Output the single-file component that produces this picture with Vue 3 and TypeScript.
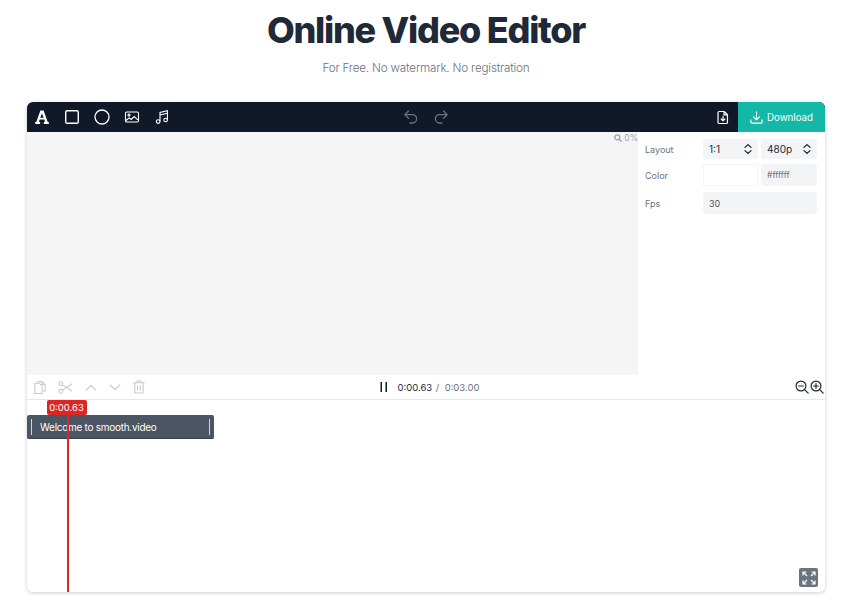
<script setup lang="ts">
const clipLabel: string = 'Welcome to smooth.video'
</script>

<template>
  <div class="page">
    <header class="head">
      <h1>Online Video Editor</h1>
      <p>For Free. No watermark. No registration</p>
    </header>
    <section class="editor">
      <div class="toolbar">
        <div class="tools">
          <svg class="ti" width="16" height="16" viewBox="0 0 16 16"><path fill="#fff" d="M6.4 1.5h3.2l4 11.2 1.2.4V15H9.8v-1.9l1.2-.3-.7-2.2H5.6l-.7 2.2 1.2.3V15H1.2v-1.9l1.2-.4zM8 4.6 6.2 8.8h3.5z"/></svg>
          <svg class="ti" width="16" height="16" viewBox="0 0 16 16" fill="none" stroke="#fff" stroke-width="1.4"><rect x="1.7" y="1.7" width="12.6" height="12.6" rx="1.6"/></svg>
          <svg class="ti" width="16" height="16" viewBox="0 0 16 16" fill="none" stroke="#fff" stroke-width="1.3"><circle cx="8" cy="8" r="7"/></svg>
          <svg class="ti" width="16" height="16" viewBox="0 0 16 16" fill="none" stroke="#fff" stroke-width="1.1"><rect x="1.5" y="3" width="13" height="10" rx="1.2"/><circle cx="5" cy="6" r="1"/><path d="M2 11.5l3.2-2.6 2 1.6 3-3 3.6 3.4"/></svg>
          <svg class="ti" width="16" height="16" viewBox="0 0 16 16" fill="none" stroke="#fff" stroke-width="1.1"><circle cx="4.2" cy="12.6" r="1.8"/><circle cx="11.6" cy="11" r="1.8"/><path d="M6 12.6V3.4l7.4-1.8V11M6 6l7.4-1.8"/></svg>
        </div>
        <div class="history">
          <svg width="16" height="16" viewBox="0 0 16 16" fill="none" stroke="#6b7280" stroke-width="1.3" stroke-linecap="round" stroke-linejoin="round"><path d="M5.5 2 1.8 5.6l3.7 3.6M2 5.6h7.4a4 4 0 0 1 0 8.4H7"/></svg>
          <svg width="16" height="16" viewBox="0 0 16 16" fill="none" stroke="#6b7280" stroke-width="1.3" stroke-linecap="round" stroke-linejoin="round"><path d="M10.5 2l3.7 3.6-3.7 3.6M14 5.6H6.6a4 4 0 0 0 0 8.4H9"/></svg>
        </div>
        <div class="right">
          <svg class="file" width="12" height="15" viewBox="0 0 14 16" fill="none" stroke="#fff" stroke-width="1.4" stroke-linejoin="round" stroke-linecap="round"><path d="M2.4 1h6l3.8 3.8v9a1.2 1.2 0 0 1-1.2 1.2H2.4a1.2 1.2 0 0 1-1.2-1.2V2.2A1.2 1.2 0 0 1 2.4 1zM8.2 1v4h4M7 6.8v5M4.8 9.8 7 12l2.2-2.2"/></svg>
          <button class="download">
            <svg width="13" height="13" viewBox="0 0 14 14" fill="none" stroke="#fff" stroke-width="1.2" stroke-linecap="round" stroke-linejoin="round"><path d="M1 9.5V12a1 1 0 0 0 1 1h10a1 1 0 0 0 1-1V9.5M7 1v8.5M3.8 6.4 7 9.6l3.2-3.2"/></svg>
            Download
          </button>
        </div>
      </div>

      <div class="main">
        <div class="preview">
          <span class="zoom">
            <svg width="8" height="8" viewBox="0 0 8 8" fill="none" stroke="#9ca3af" stroke-width="1.3"><circle cx="3.3" cy="3.3" r="2.5"/><path d="M5.2 5.2 7.6 7.6"/></svg>
            0%
          </span>
        </div>
        <aside class="panel">
          <div class="row">
            <span class="label">Layout</span>
            <div class="field sel wide">1:1
              <svg width="8" height="12" viewBox="0 0 8 12" fill="none" stroke="#111827" stroke-width="1.2" stroke-linecap="round" stroke-linejoin="round"><path d="M1 4.4 4 1.6l3 2.8M1 7.6l3 2.8 3-2.8"/></svg>
            </div>
            <div class="field sel narrow">480p
              <svg width="8" height="12" viewBox="0 0 8 12" fill="none" stroke="#111827" stroke-width="1.2" stroke-linecap="round" stroke-linejoin="round"><path d="M1 4.4 4 1.6l3 2.8M1 7.6l3 2.8 3-2.8"/></svg>
            </div>
          </div>
          <div class="row">
            <span class="label">Color</span>
            <div class="swatch"></div>
            <div class="field hex narrow">#ffffff</div>
          </div>
          <div class="row">
            <span class="label">Fps</span>
            <div class="field fps">30</div>
          </div>
        </aside>
      </div>

      <div class="controls">
        <div class="edit-tools">
          <svg width="12" height="15" viewBox="0 0 14 16" fill="none" stroke="#c4c8cf" stroke-width="1.2" stroke-linejoin="round"><path d="M4.5 3V1h5l3.5 3.5V12H9.5M9.5 1v3.5H13M1 3h5l3.5 3.5V15H1z"/></svg>
          <svg width="15" height="13" viewBox="0 0 16 14" fill="none" stroke="#c4c8cf" stroke-width="1.1"><circle cx="3" cy="3" r="2.1"/><circle cx="3" cy="11" r="2.1"/><path d="M4.8 4.2 15 11M4.8 9.8 15 3"/></svg>
          <svg width="12" height="7" viewBox="0 0 14 8" fill="none" stroke="#c4c8cf" stroke-width="1.2"><path d="M1 7.4 7 1.4l6 6"/></svg>
          <svg width="12" height="7" viewBox="0 0 14 8" fill="none" stroke="#c4c8cf" stroke-width="1.2"><path d="M1 .6l6 6 6-6"/></svg>
          <svg width="12" height="14" viewBox="0 0 13 15" fill="none" stroke="#c4c8cf" stroke-width="1.1"><path d="M.5 3h12M4.5 3V1h4v2M2 3v11h9V3M5 5.5v6M8 5.5v6"/></svg>
        </div>
        <div class="time">
          <svg class="pause" width="8" height="10" viewBox="0 0 8 10" fill="#111827"><rect x="0.5" width="1.5" height="10"/><rect x="5.5" width="1.5" height="10"/></svg>
          <span class="now">0:00.63</span>
          <span class="sep">/</span>
          <span class="total">0:03.00</span>
        </div>
        <div class="zooms">
          <svg width="14" height="14" viewBox="0 0 14 14" fill="none" stroke="#1f2937" stroke-width="1.2" stroke-linecap="round"><circle cx="6" cy="6" r="4.9"/><path d="M9.6 9.6 13.2 13.2M3.6 6h4.8"/></svg>
          <svg width="14" height="14" viewBox="0 0 14 14" fill="none" stroke="#1f2937" stroke-width="1.2" stroke-linecap="round"><circle cx="6" cy="6" r="4.9"/><path d="M9.6 9.6 13.2 13.2M3.6 6h4.8M6 3.6v4.8"/></svg>
        </div>
      </div>

      <div class="timeline">
        <div class="clip">
          <i class="handle"></i>
          <span>{{ clipLabel }}</span>
          <i class="handle"></i>
        </div>
        <div class="playhead"><span class="badge">0:00.63</span></div>
        <button class="fullscreen">
          <svg width="14" height="14" viewBox="0 0 14 14" fill="none" stroke="#fff" stroke-width="1.2"><path d="M1 4.5V1h3.5M1 1l4 4M13 4.5V1H9.5M13 1 9 5M1 9.5V13h3.5M1 13l4-4M13 9.5V13H9.5M13 13 9 9"/></svg>
        </button>
      </div>
    </section>
  </div>
</template>

<style scoped>
.page {
  width: 852px;
  height: 600px;
  overflow: hidden;
  background: #fff;
  font-family: Inter, "Liberation Sans", sans-serif;
  padding: 0 27px;
  box-sizing: border-box;
}
.head { text-align: center; height: 102px; }
h1 {
  margin: 0;
  padding-top: 8px;
  font-size: 36px;
  line-height: 44px;
  font-weight: 800;
  letter-spacing: -1.25px;
  color: #1f2937;
}
.head p {
  margin: 7px 0 0;
  font-size: 11.7px;
  line-height: 18px;
  letter-spacing: -0.19px;
  color: #6b7280;
  font-weight: 300;
}
.editor {
  width: 798px;
  height: 490px;
  border-radius: 6px;
  background: #fff;
  box-shadow: 0 1px 4px rgba(0, 0, 0, 0.2);
  display: flex;
  flex-direction: column;
  overflow: hidden;
}
.toolbar {
  flex: 0 0 30px;
  background: #111827;
  display: grid;
  grid-template-columns: 1fr auto 1fr;
  align-items: center;
}
.tools { display: flex; align-items: center; gap: 14px; padding-left: 7px; }
.history { display: flex; gap: 14px; }
.right { display: flex; justify-content: flex-end; align-items: center; height: 100%; }
.file { margin-right: 9px; }
.download {
  width: 87px;
  height: 100%;
  border: 0;
  background: #14b8a6;
  color: #fff;
  font: 400 9.7px Inter, sans-serif;
  display: flex;
  align-items: center;
  justify-content: center;
  gap: 4px;
  padding: 0;
}
.main { flex: 0 0 243px; display: flex; }
.preview {
  flex: 0 0 611px;
  background: #f5f5f5;
  display: flex;
  justify-content: flex-end;
  align-items: flex-start;
}
.zoom {
  font-size: 8.5px;
  line-height: 12px;
  color: #9ca3af;
  display: flex;
  align-items: center;
  gap: 2px;
}
.panel {
  flex: 1;
  padding: 7px 8px 0 7px;
  display: flex;
  flex-direction: column;
  gap: 5px;
}
.row { display: flex; align-items: center; gap: 3px; min-height: 20px; }
.row:nth-child(2) { min-height: 22px; }
.row:nth-child(3) { min-height: 22px; margin-top: 1px; }
.label { flex: 0 0 55px; font-size: 9px; color: #6b7280; }
.field {
  height: 20px;
  background: #f3f4f6;
  border-radius: 3px;
  box-sizing: border-box;
  display: flex;
  align-items: center;
  justify-content: space-between;
  padding: 0 6px;
  font-size: 10px;
  color: #1f2937;
}
.row:nth-child(2) .field, .row:nth-child(3) .field { height: 22px; }
.wide { width: 55px; }
.narrow { width: 56px; }
.hex { font-size: 8.5px; color: #6b7280; }
.fps { width: 114px; font-size: 9px; color: #4b5563; }
.swatch {
  width: 55px;
  height: 22px;
  box-sizing: border-box;
  border: 1px solid #f3f4f6;
  background: #fff;
}
.controls {
  flex: 0 0 25px;
  border-bottom: 1px solid #e5e7eb;
  box-sizing: border-box;
  display: grid;
  grid-template-columns: 1fr auto 1fr;
  align-items: center;
  padding: 0 1px 0 7px;
}
.edit-tools { display: flex; align-items: center; gap: 12px; }
.time { display: flex; align-items: center; font-size: 9.5px; margin-right: -2px; }
.pause { margin-right: 9px; }
.now { color: #1f2937; font-weight: 400; }
.sep { margin: 0 5.5px 0 3.5px; color: #6b7280; }
.total { color: #6b7280; }
.zooms { display: flex; justify-content: flex-end; gap: 1px; }
.timeline { flex: 1; position: relative; }
.clip {
  position: absolute;
  left: 0;
  top: 15px;
  width: 187px;
  height: 24px;
  box-sizing: border-box;
  background: #4b5563;
  border-radius: 2px;
  border-bottom: 1px solid #374151;
  display: flex;
  align-items: center;
  justify-content: space-between;
  padding: 1px 4px 0;
  color: #fff;
  font-size: 10px;
  letter-spacing: -0.27px;
}
.clip span { flex: 1; padding-left: 8px; }
.handle { width: 1px; height: 16px; background: #d1d5db; }
.playhead {
  position: absolute;
  left: 39.5px;
  top: 0;
  bottom: 0;
  width: 2px;
  background: #dc2626;
}
.badge {
  position: absolute;
  top: 0;
  left: -20px;
  width: 40px;
  height: 15px;
  background: #dc2626;
  border-radius: 2px;
  color: #fff;
  font-size: 9.5px;
  line-height: 15px;
  text-align: center;
}
.fullscreen {
  position: absolute;
  right: 7px;
  bottom: 5px;
  width: 19px;
  height: 19px;
  border: 0;
  border-radius: 2px;
  background: #6b7280;
  padding: 0;
  display: flex;
  align-items: center;
  justify-content: center;
}
</style>
